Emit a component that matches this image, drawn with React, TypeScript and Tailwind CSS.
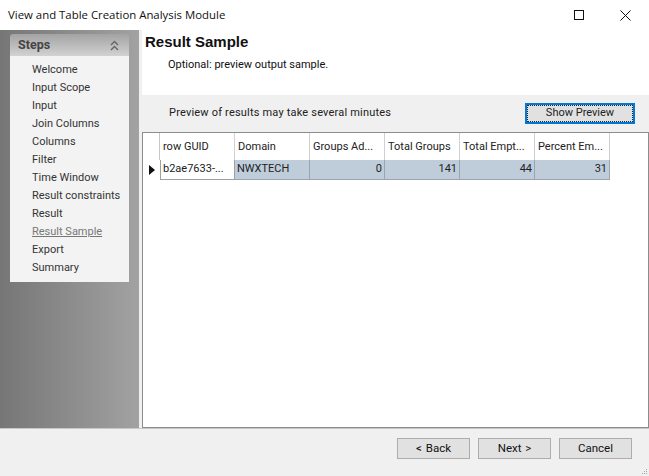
import React from "react";

const steps = [
  "Welcome",
  "Input Scope",
  "Input",
  "Join Columns",
  "Columns",
  "Filter",
  "Time Window",
  "Result constraints",
  "Result",
  "Result Sample",
  "Export",
  "Summary",
];

const columns = ["row GUID", "Domain", "Groups Ad...", "Total Groups", "Total Empt...", "Percent Em..."];

function WizardButton({ label }: { label: string }) {
  return (
    <button className="h-[21px] w-[73px] border border-[#adadad] bg-[#e1e1e1] text-[11.5px] leading-none text-[#111] [word-spacing:1px]">
      {label}
    </button>
  );
}

export default function App() {
  return (
    <div className="flex h-[476px] w-[649px] flex-col overflow-hidden bg-[#f0f0f0] font-['Roboto','Noto_Sans',sans-serif] text-[11px] text-[#222]">
      {/* Title bar */}
      <div className="flex h-[30px] shrink-0 items-center justify-between bg-white pl-2">
        <span className="font-['Open_Sans',sans-serif] text-[11.4px] text-[#111]">View and Table Creation Analysis Module</span>
        <div className="flex items-center gap-[36px] pr-[18px]">
          <svg width="10" height="10" viewBox="0 0 10 10" fill="none" stroke="#111" strokeWidth="1">
            <rect x="0.5" y="0.5" width="9" height="9" />
          </svg>
          <svg width="11" height="11" viewBox="0 0 11 11" fill="none" stroke="#111" strokeWidth="1">
            <path d="M0.5 0.5 L10.5 10.5 M10.5 0.5 L0.5 10.5" />
          </svg>
        </div>
      </div>

      <div className="flex min-h-0 flex-1">
        {/* Steps sidebar */}
        <aside className="w-[139px] shrink-0 bg-gradient-to-r from-[#767676] to-[#a2a2a2] pl-[10px] pr-[10px] pt-[4px]">
          <div className="flex h-[22px] items-center justify-between rounded-t-[3px] bg-gradient-to-b from-[#a3a3a3] to-[#d2d2d2] pl-2 pr-[10px] pt-px">
            <span className="text-[12.5px] font-bold text-[#444]">Steps</span>
            <svg width="9" height="11" viewBox="0 0 9 11" fill="none" stroke="#666" strokeWidth="1.4">
              <path d="M1 5 L4.5 1.5 L8 5 M1 10 L4.5 6.5 L8 10" />
            </svg>
          </div>
          <ul className="bg-[#f3f3f3] pb-[5px] pl-[22px] pt-[5px]">
            {steps.map(s => (
              <li
                key={s}
                className={
                  s === "Result Sample"
                    ? "h-[18px] leading-[18px] whitespace-nowrap text-[#777] underline"
                    : "h-[18px] leading-[18px] whitespace-nowrap text-[#333]"
                }
              >
                {s}
              </li>
            ))}
          </ul>
        </aside>

        {/* Main panel */}
        <main className="ml-[3px] flex min-w-0 flex-1 flex-col">
          <div className="h-[65px] shrink-0 bg-white pl-[3px] pt-[2px]">
            <h1 className="font-['Liberation_Sans',sans-serif] text-[15px] font-bold leading-[20px] text-[#111]">
              Result Sample
            </h1>
            <p className="ml-[23px] mt-[5px] leading-[16px] text-[#111]">Optional: preview output sample.</p>
          </div>

          <div className="flex h-[37px] shrink-0 items-center justify-between pl-[27px] pr-[14px]">
            <span className="tracking-[0.19px] text-[#222]">Preview of results may take several minutes</span>
            <button className="flex h-[21px] w-[110px] items-center justify-center border-2 border-[#0078d7] bg-[#e1e1e1] text-[11px] text-[#222] outline-1 -outline-offset-3 outline-dotted outline-[#222]">
              Show Preview
            </button>
          </div>

          <div className="flex-1 border border-[#8c8c8c] bg-white">
            <div className="flex h-[27px] items-stretch">
              <div className="w-[17px] border-r border-[#c8c8c8]" />
              {columns.map(c => (
                <div
                  key={c}
                  className="flex w-[75px] items-center border-r border-[#d0d0d0] pl-[3px] pt-px whitespace-nowrap text-[#222]"
                >
                  {c}
                </div>
              ))}
            </div>
            <div className="flex h-[20px] items-stretch">
              <div className="flex w-[17px] items-center justify-center">
                <svg width="6" height="10" viewBox="0 0 6 10" fill="#111">
                  <path d="M0 0 L6 5 L0 10 Z" />
                </svg>
              </div>
              <div className="flex w-[75px] items-center border-b border-l border-r border-[#a0a0a0] pl-[2px] whitespace-nowrap">
                b2ae7633-...
              </div>
              <div className="flex w-[75px] items-center border-b border-r border-[#9aa5b0] bg-[#bfcddb] pl-[2px]">
                NWXTECH
              </div>
              {["0", "141", "44", "31"].map(v => (
                <div
                  key={v}
                  className="flex w-[75px] items-center justify-end border-b border-r border-[#9aa5b0] bg-[#bfcddb] pr-[2px]"
                >
                  {v}
                </div>
              ))}
            </div>
          </div>
        </main>
      </div>

      {/* Footer */}
      <div className="relative flex h-[48px] shrink-0 items-start justify-end gap-[8px] border-t border-[#c8c8c8] pr-[17px] pt-[9px]">
        <WizardButton label="< Back" />
        <WizardButton label="Next >" />
        <WizardButton label="Cancel" />
        <div className="absolute bottom-[2px] right-[2px] grid grid-cols-3 gap-px">
          {[0, 1, 2, 3, 4, 5, 6, 7, 8].map(i => (
            <span key={i} className={i === 0 || i === 1 || i === 3 ? "h-px w-px" : "h-px w-px bg-[#a8a8a8]"} />
          ))}
        </div>
      </div>
    </div>
  );
}
